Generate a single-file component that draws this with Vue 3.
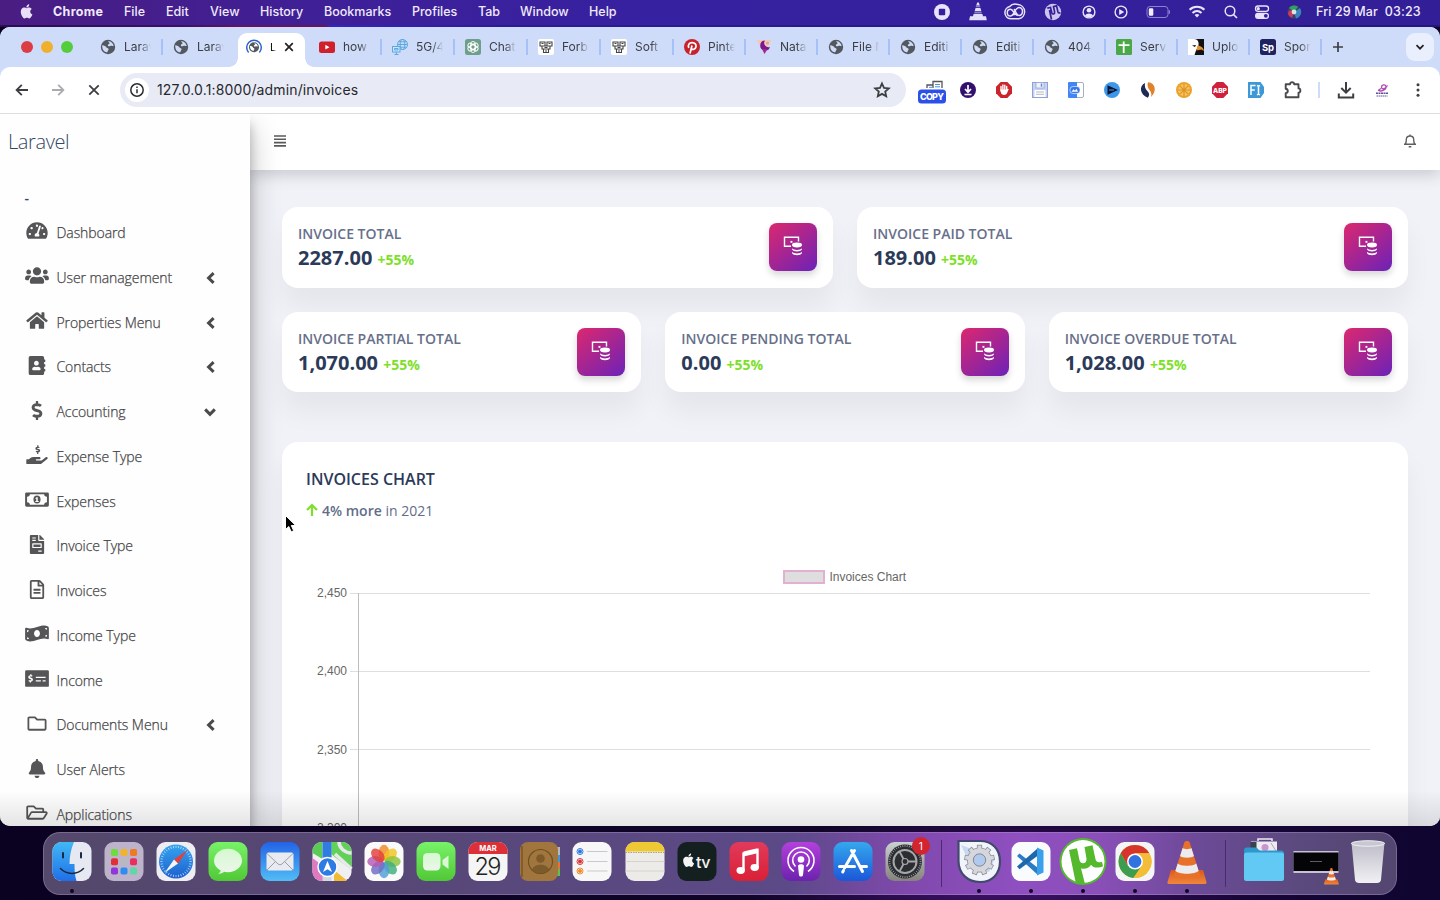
<script setup>
const menus = ['File', 'Edit', 'View', 'History', 'Bookmarks', 'Profiles', 'Tab', 'Window', 'Help']

const globe = '<circle cx="8" cy="8" r="7.2" fill="#53585f"/><path d="M2.2 6.2c2.2.2 3.5.8 4.1 2 .5 1.200 2.300.6 2.300 2 0 1.100-1.200 1.300-1.200 3.100-3 .1-5.400-2.600-5.200-7.100zM8 2.300c2.600-.3 4.900 1.600 5.700 4.400-1.300.8-2.300-.3-3.500.4-1.200.6-2.700 0-2.300-1.200.3-1 1.600-.7 1.700-1.700 0-.8-1.400-.9-1.600-1.900z" fill="#cfdcf9"/>'
const robot = '<rect width="16" height="16" rx="2" fill="#fff"/><g fill="none" stroke="#444" stroke-width="1.100"><path d="M2 3h5v4H2zM9 3h5v4H9zM4 7h8v3H4zM5.500 10h5v3.500h-5z"/></g><path d="M3.500 4.500h2M10.500 4.500h2M6.500 8.500h3M7 12h2" stroke="#444"/>'

const tabs = [
  { title: 'Larav', w: 73, icon: globe, sep: true },
  { title: 'Larav', w: 73, icon: globe },
  { title: 'L', w: 73, active: true, icon: '<path d="M2.600 13.400a7.300 7.300 0 1 1 10.800 0" fill="none" stroke="#2b62cc" stroke-width="1.500"/><circle cx="8" cy="8.300" r="5" fill="#53585f"/><path d="M4 7c1.500 0 2.500.5 3 1.400.4.8 1.500.5 1.400 1.500-.1.800-.8.900-.8 2.100C5.200 11.800 3.800 9.800 4 7zM8.200 4.300c1.800 0 3.200 1.300 3.700 3-1 .5-1.700-.2-2.500.2-.9.400-1.700-.1-1.500-.9.200-.7 1.100-.4 1.200-1.100z" fill="#fff"/>' },
  { title: 'how', w: 73, sep: true, icon: '<rect x="0" y="2.500" width="16" height="11.500" rx="2.500" fill="#cf202b"/><path d="M6.300 5.800v4.800L10.500 8.200z" fill="#fff"/>' },
  { title: '5G/4', w: 73, sep: true, icon: '<g fill="none" stroke="#5aa9e0" stroke-width="1"><circle cx="10.500" cy="5.500" r="5"/><ellipse cx="10.500" cy="5.500" rx="2.300" ry="5"/><path d="M5.500 5.500h10M6.500 2.800h8M6.500 8.200h8"/></g><g fill="#cfe4fb" stroke="#5aa9e0"><rect x=".5" y="7.500" width="7.500" height="5.500"/><path d="M2.500 15.500h4M4.300 13v2.500M2.500 9.500h3.500v1.500H2.500z"/></g>' },
  { title: 'Chat', w: 73, sep: true, icon: '<rect width="16" height="16" rx="2.500" fill="#6f9e8b"/><g fill="none" stroke="#fff" stroke-width=".9"><rect x="5.700" y="2.500" width="4.600" height="8" rx="2.300"/><rect x="5.700" y="2.500" width="4.600" height="8" rx="2.300" transform="rotate(60 8 8)"/><rect x="5.700" y="2.500" width="4.600" height="8" rx="2.300" transform="rotate(120 8 8)"/><rect x="5.700" y="2.500" width="4.600" height="8" rx="2.300" transform="rotate(180 8 8)"/><rect x="5.700" y="2.500" width="4.600" height="8" rx="2.300" transform="rotate(240 8 8)"/><rect x="5.700" y="2.500" width="4.600" height="8" rx="2.300" transform="rotate(300 8 8)"/></g>' },
  { title: 'Forb', w: 73, sep: true, icon: robot },
  { title: 'Soft', w: 73, sep: true, icon: robot },
  { title: 'Pinte', w: 72, sep: true, icon: '<circle cx="8" cy="8" r="8" fill="#c8232c"/><path d="M6 14.500 8 6.500M4.800 8.800C3.600 6.300 5 3.600 8.200 3.600c2.800 0 4.300 1.900 3.800 4.200-.6 2.600-3.600 3.500-4.700 1.700" fill="none" stroke="#fff" stroke-width="1.700"/>' },
  { title: 'Nata', w: 72, sep: true, icon: '<path d="M.5 1h15L8.500 15.500z" fill="#f0c9b8"/><path d="M9 1.500a5 5 0 1 0 5 6.500 4.300 4.300 0 0 1-5-6.500z" fill="#7a1a8e"/><path d="M6 10h5.500l-3 5z" fill="#9a2a9a"/><circle cx="11.500" cy="4" r="1.600" fill="#e9a08c"/>' },
  { title: 'File M', w: 72, sep: true, icon: globe },
  { title: 'Editi', w: 72, sep: true, icon: globe },
  { title: 'Editi', w: 72, sep: true, icon: globe },
  { title: '404', w: 72, sep: true, icon: globe },
  { title: 'Serv', w: 72, sep: true, icon: '<rect width="16" height="16" rx="1.500" fill="#4ba847"/><path d="M2.500 6.200h11M7.700 2.500v11.500" stroke="#fff" stroke-width="1.800"/>' },
  { title: 'Uplo', w: 72, sep: true, icon: '<path d="M0 0h16v16H0z" fill="#111"/><path d="M0 0h6c4 0 5 3 4.500 6.500L8 11.500 6.500 16H0z" fill="#fff"/><path d="M9.500 6.500c3 .3 6 2 6.500 5.500l-2.500-1.500-5 1z" fill="#e8912a"/><path d="M4 6.500l4-.5-1 2z" fill="#111"/>' },
  { title: 'Spor', w: 72, sep: true, icon: '<rect width="16" height="16" rx="2.500" fill="#1f2360"/><text x="8" y="11.800" text-anchor="middle" font-family="Inter, sans-serif" font-size="9.500" font-weight="700" fill="#fff">Sp</text>' },
]

const status = [
  { w: 36, icon: '<circle cx="12" cy="12" r="8" fill="#eae4fb"/><rect x="8.800" y="8.800" width="6.400" height="6.400" rx="1" fill="#34209c"/>' },
  { w: 36, icon: '<path d="M11.200 2.500h1.600l1 3h-3.600zM9.600 8h4.800l1 3.300H8.600zM7.600 14h8.800l.6 2.200H20l.8 4H3.200l.8-4h3z" fill="#e6dff8"/><path d="M9.800 6.500h4.400M8.300 12.700h7.400" stroke="#8f7fd0" stroke-width="1.500"/>' },
  { w: 38, icon: '<g fill="none" stroke="#eae4fb" stroke-width="1.500"><path d="M7.500 18.800a6.200 6.200 0 0 1-.8-12.200C9 3.800 12.500 3.600 15 4.600a7.200 7.200 0 0 1 1 14.200z"/><path d="M11.500 15.300l-1-1M14.500 15.500c-3.500 0-4-6.200-7-6.200-4.300 0-4.300 6.700 0 6.700 3.500 0 4.500-8.500 8.300-8.500 4.900 0 4.900 8 .2 8-2.500 0-3.500-4.500-5-6.500"/></g>' },
  { w: 38, icon: '<circle cx="12" cy="12" r="8.200" fill="#cfc4ee"/><path d="M6.300 8.200 9.500 7.500l1.300 5.200c.6 2 3.200 1.600 2.800-.8L12.500 6.700l3-.8 1.500 6c.3 1 1.100 1.300 2.500.8M8.500 10l2 9.500" fill="none" stroke="#35219b" stroke-width="1.700"/>' },
  { w: 33, icon: '<circle cx="12" cy="12" r="5.900" fill="none" stroke="#eae4fb" stroke-width="1.400"/><circle cx="12" cy="10.300" r="2.300" fill="#eae4fb"/><path d="M8 15.800c1.400-3.200 6.600-3.200 8 0a6 6 0 0 1-8 0z" fill="#eae4fb"/>' },
  { w: 32, icon: '<circle cx="12" cy="12" r="5.900" fill="none" stroke="#eae4fb" stroke-width="1.400"/><path d="M10.200 9v6l5-3z" fill="#eae4fb"/>' },
  { w: 41, icon: '<rect x="1" y="6.500" width="21" height="11" rx="3" fill="none" stroke="#8f80cf"/><rect x="2.800" y="8.300" width="4.500" height="7.400" rx="1.200" fill="#f2eefd"/><path d="M23.300 10.300v3.400" stroke="#8f80cf" stroke-width="1.400"/>' },
  { w: 38, icon: '<g fill="none" stroke="#eae4fb" stroke-width="2.100"><path d="M4.600 9.800c4.200-4 10.600-4 14.800 0M7.500 12.900c2.600-2.400 6.400-2.400 9 0"/></g><path d="M9.600 15c1.400-1.300 3.400-1.300 4.800 0L12 17.500z" fill="#eae4fb"/>' },
  { w: 29, icon: '<circle cx="11" cy="11" r="4.800" fill="none" stroke="#eae4fb" stroke-width="1.500"/><path d="M14.600 14.600 18 18" stroke="#eae4fb" stroke-width="1.600"/>' },
  { w: 34, icon: '<rect x="5.500" y="6" width="13" height="5.300" rx="2.600" fill="none" stroke="#eae4fb" stroke-width="1.300"/><circle cx="8.300" cy="8.700" r="1.600" fill="#eae4fb"/><rect x="5" y="12.700" width="14" height="6.200" rx="3" fill="#eae4fb"/><circle cx="15.800" cy="15.800" r="1.900" fill="#34209c"/>' },
  { w: 29, icon: '<circle cx="12" cy="12" r="6.700" fill="#3a3f66"/><path d="M7 8a6.700 6.700 0 0 1 9-1.300l-4 5.300z" fill="#2f9f6a"/><path d="M6 14c0-4 3-5 6-2l-2 6a6.700 6.700 0 0 1-4-4z" fill="#c93a5f"/><path d="M12 12l6-4a6.700 6.700 0 0 1-4 10.400z" fill="#3a86b8"/><circle cx="12" cy="12" r="2.400" fill="#fff" opacity=".8"/>' },
]

const extensions = [
  '<path d="M7 10V7h6M13 10V3.500h9V10" fill="none" stroke="#555" stroke-width="1.300"/><path d="M15 6.500h5M15 8.800h5M9 9.300h3" stroke="#4f8fe0"/><rect x="-2" y="11.500" width="28" height="14" rx="3.500" fill="#2b50e8"/><text x="12" y="22" text-anchor="middle" textLength="24" font-family="Inter, sans-serif" font-size="9" font-weight="800" fill="#fff">COPY</text>',
  '<circle cx="12" cy="12" r="8" fill="#34106e"/><path d="M12 7v7M9 11l3 3.200 3-3.200M8.500 16.500h7" fill="none" stroke="#fff" stroke-width="1.700"/>',
  '<path d="M8.700 4h6.600L20 8.700v6.600L15.300 20H8.700L4 15.300V8.700z" fill="#c9252b"/><path d="M9 13V8.500M10.900 12V7M12.800 12V7.200M14.700 13V8.500M16 11.500l-1.200 2" stroke="#fff" stroke-width="1.400" stroke-linecap="round"/><path d="M8.400 11.500h7v3c-.8 3-5 3.300-6.300.8z" fill="#fff"/>',
  '<rect x="4.500" y="4.500" width="15" height="15" fill="#c6d2f0" stroke="#8fa1d8"/><rect x="8" y="4.500" width="8" height="5.500" fill="#eef3fc" stroke="#8fa1d8" stroke-width=".7"/><path d="M13.500 5.500v3.200" stroke="#7088cc" stroke-width="1.500"/><rect x="6.500" y="12" width="11" height="7" fill="#fff"/><path d="M8 14h8M8 16.300h8" stroke="#b2b8c8"/>',
  '<rect x="9" y="4.500" width="10.500" height="15" rx="1.500" fill="#fff" stroke="#a9b0bb"/><path d="M5 4h8v16H5a1 1 0 0 1-1-1V5a1 1 0 0 1 1-1z" fill="#4285f4"/><rect x="6" y="8.500" width="10" height="7" rx="3" fill="#3a78e8" stroke="#fff" stroke-width=".6"/><path d="M7.500 13.700l2-2.500 1.500 1.500 1.500-2 1.500 3z" fill="#fff"/>',
  '<circle cx="12" cy="12" r="8" fill="#3c97ea"/><path d="M7.500 7.200 18 12 7.500 16.800z" fill="#0d1330"/><path d="M9 12h5" stroke="#3c97ea"/>',
  '<path d="M9 5c-6 2.500-5.500 11.500 2.800 14.800 2-2.800 1.700-4.800-.3-6.600-2.200-2-3.100-4.700-2.500-8.200z" fill="#1f2a55"/><path d="M12 4.300c7.800.5 9 9.500 3 14.700.9-3 .1-5-1.500-7-1.800-2.200-2.500-4.900-1.500-7.700z" fill="#e0822c"/>',
  '<circle cx="12" cy="12" r="8" fill="#e8a22e"/><circle cx="12" cy="12" r="6" fill="#f6c55a"/><path d="M12 6v12M6 12h12M7.800 7.800l8.400 8.400M16.200 7.800l-8.400 8.400" stroke="#e0922a" stroke-width="1.200"/>',
  '<path d="M8.700 4h6.600L20 8.700v6.600L15.300 20H8.700L4 15.300V8.700z" fill="#d0203c"/><text x="12" y="14.700" text-anchor="middle" font-family="Inter, sans-serif" font-size="6.700" font-weight="800" fill="#fff">ABP</text>',
  '<path d="M4 4h12.500l3.500 5v6l-3.500 5H4z" fill="#3e98d8"/><path d="M7 17V7.500h4.500M7 12h3.800M13 7.500l1.500.7 1.500-.7M14.500 8v8M13 16.700l1.500-.7 1.500.7" fill="none" stroke="#fff" stroke-width="1.500"/>',
  '<path d="M5.700 6.200H10c-.2-2.600 4.400-2.600 4.200 0h4.300v4.200c2.500 0 2.500 4.300 0 4.300v4.600H5.700v-4.200c2.800-.4 2.800-4 0-4.400z" fill="none" stroke="#484a4e" stroke-width="1.900" stroke-linejoin="round"/>',
]

const nav = [
  { label: 'Dashboard', vb: '0 0 576 512', d: 'M288 32C128.940 32 0 160.940 0 320c0 52.800 14.250 102.260 39.060 144.800 5.610 9.620 16.300 15.200 27.440 15.200h443c11.140 0 21.830-5.580 27.440-15.200C561.750 422.260 576 372.800 576 320c0-159.060-128.940-288-288-288zm0 64c14.710 0 26.580 10.130 30.320 23.650-1.110 2.260-2.640 4.230-3.450 6.670l-9.220 27.670c-5.130 3.490-10.970 6.010-17.640 6.010-17.670 0-32-14.330-32-32S270.330 96 288 96zM96 384c-17.670 0-32-14.330-32-32s14.330-32 32-32 32 14.330 32 32-14.330 32-32 32zm48-160c-17.670 0-32-14.330-32-32s14.330-32 32-32 32 14.330 32 32-14.330 32-32 32zm246.770-72.410l-61.330 184C343.130 347.330 352 364.540 352 384c0 11.720-3.380 22.550-8.880 32H232.880c-5.500-9.450-8.880-20.280-8.880-32 0-33.940 26.500-61.430 59.900-63.590l61.340-184.010c4.170-12.560 17.730-19.450 30.360-15.170 12.570 4.190 19.350 17.790 15.170 30.360zm14.660 57.200l15.520-46.550c3.470-1.290 7.130-2.230 11.050-2.230 17.670 0 32 14.330 32 32s-14.330 32-32 32c-11.380-.01-20.890-6.280-26.570-15.220zM480 384c-17.670 0-32-14.330-32-32s14.330-32 32-32 32 14.330 32 32-14.330 32-32 32z' },
  { label: 'User management', arrow: 'left', vb: '0 0 640 512', d: 'M96 224c35.300 0 64-28.700 64-64s-28.700-64-64-64-64 28.700-64 64 28.700 64 64 64zm448 0c35.300 0 64-28.700 64-64s-28.700-64-64-64-64 28.700-64 64 28.700 64 64 64zm32 32h-64c-17.600 0-33.500 7.100-45.100 18.600 40.300 22.100 68.900 62 75.100 109.400h66c17.700 0 32-14.300 32-32v-32c0-35.300-28.700-64-64-64zm-256 0c61.900 0 112-50.100 112-112S381.900 32 320 32 208 82.100 208 144s50.100 112 112 112zm76.800 32h-8.300c-20.800 10-43.900 16-68.500 16s-47.600-6-68.500-16h-8.300C179.600 288 128 339.600 128 403.200V432c0 26.500 21.500 48 48 48h288c26.500 0 48-21.500 48-48v-28.800c0-63.600-51.600-115.200-115.200-115.200zm-223.700-13.400C161.500 263.100 145.600 256 128 256H64c-35.300 0-64 28.700-64 64v32c0 17.700 14.300 32 32 32h65.900c6.300-47.400 34.900-87.300 75.200-109.400z' },
  { label: 'Properties Menu', arrow: 'left', vb: '0 0 576 512', d: 'M280.370 148.260L96 300.110V464a16 16 0 0 0 16 16l112.060-.29a16 16 0 0 0 15.920-16V368a16 16 0 0 1 16-16h64a16 16 0 0 1 16 16v95.640a16 16 0 0 0 16 16.050L464 480a16 16 0 0 0 16-16V300L295.670 148.260a12.190 12.190 0 0 0-15.300 0zM571.600 251.470L488 182.560V44.050a12 12 0 0 0-12-12h-56a12 12 0 0 0-12 12v72.610L318.470 43a48 48 0 0 0-61 0L4.340 251.470a12 12 0 0 0-1.600 16.900l25.500 31A12 12 0 0 0 45.150 301l235.220-193.740a12.190 12.190 0 0 1 15.300 0L530.900 301a12 12 0 0 0 16.900-1.600l25.500-31a12 12 0 0 0-1.700-16.930z' },
  { label: 'Contacts', arrow: 'left', vb: '0 0 448 512', d: 'M436 160c6.600 0 12-5.400 12-12v-40c0-6.600-5.400-12-12-12h-20V48c0-26.500-21.500-48-48-48H48C21.500 0 0 21.500 0 48v416c0 26.500 21.500 48 48 48h320c26.500 0 48-21.500 48-48v-48h20c6.600 0 12-5.400 12-12v-40c0-6.600-5.400-12-12-12h-20v-64h20c6.600 0 12-5.400 12-12v-40c0-6.600-5.400-12-12-12h-20v-64h20zm-228-32c35.300 0 64 28.700 64 64s-28.700 64-64 64-64-28.700-64-64 28.700-64 64-64zm112 236.800c0 10.600-10 19.200-22.400 19.200H118.400C106 384 96 375.400 96 364.800v-19.200c0-31.800 30.100-57.600 67.200-57.600h5c12.300 5.100 25.700 8 39.800 8s27.600-2.900 39.800-8h5c37.100 0 67.200 25.800 67.200 57.600v19.200z' },
  { label: 'Accounting', arrow: 'down', vb: '0 0 288 512', d: 'M209.200 233.400l-108-31.600C88.700 198.200 80 186.500 80 173.500c0-16.300 13.200-29.500 29.500-29.500h66.300c12.200 0 24.200 3.700 34.200 10.500 6.100 4.100 14.300 3.100 19.500-2l34.800-34c7.100-6.900 6.100-18.400-1.800-24.500C238 74.800 207.400 64.100 176 64V16c0-8.800-7.200-16-16-16h-32c-8.800 0-16 7.200-16 16v48h-2.500C45.800 64-5.400 118.700.5 183.600c4.200 46.100 39.400 83.600 83.800 96.600l102.500 30c12.500 3.700 21.200 15.300 21.200 28.300 0 16.300-13.200 29.500-29.500 29.500h-66.300C100 368 88 364.300 78 357.500c-6.100-4.100-14.300-3.100-19.500 2l-34.800 34c-7.100 6.900-6.100 18.400 1.800 24.500 24.500 19.200 55.100 29.900 86.500 30v48c0 8.800 7.200 16 16 16h32c8.800 0 16-7.200 16-16v-48.200c46.600-.9 90.300-28.600 105.700-72.700 21.500-61.600-14.600-124.800-72.500-141.700z' },
  { label: 'Expense Type', vb: '0 0 576 512', d: 'M565.300 328.100c-11.800-10.700-30.200-10-42.600 0L430.300 402c-11.300 9.100-25.400 14-40 14H272c-8.800 0-16-7.200-16-16s7.200-16 16-16h78.300c15.900 0 30.700-10.900 33.300-26.600 3.300-20-12.100-37.400-31.600-37.400H192c-27 0-53.100 9.300-74.100 26.300L71.400 384H16c-8.800 0-16 7.200-16 16v96c0 8.800 7.200 16 16 16h356.800c14.500 0 28.600-4.900 40-14L564 377c15.200-12.100 16.400-35.300 1.300-48.900z M335 107l-44-13c-9-3-9-15 0-15h32c6 0 11 2 16 5l25-22c-10-10-23-14-37-15V5h-34v42c-50 2-68 67-18 86l50 16c9 4 8 15-1 15h-32c-7 0-13-3-18-7l-24 24c11 9 24 14 40 15v44h34v-44c56-2 71-73 11-89z' },
  { label: 'Expenses', vb: '0 0 640 512', d: 'M40 64h560q40 0 40 40v304q0 40-40 40H40q-40 0-40-40V104q0-40 40-40zm88 48q0 64-76 70v148q76 6 76 70h384q0-64 76-70V182q-76-6-76-70zM320 148a96 108 0 1 1 0 216 96 108 0 0 1 0-216zm-10 45-32 22v22h22v58h-24v25h88v-25h-24V193z' },
  { label: 'Invoice Type', vb: '0 0 384 512', d: 'M288 256H96v64h192v-64zm89-151L279.100 7c-4.500-4.500-10.600-7-17-7H256v128h128v-6.100c0-6.300-2.500-12.400-7-16.900zm-153 31V0H24C10.700 0 0 10.700 0 24v464c0 13.300 10.700 24 24 24h336c13.300 0 24-10.700 24-24V160H248c-13.200 0-24-10.800-24-24zM64 72c0-4.420 3.580-8 8-8h80c4.420 0 8 3.580 8 8v16c0 4.420-3.580 8-8 8H72c-4.420 0-8-3.580-8-8V72zm0 64c0-4.420 3.580-8 8-8h80c4.420 0 8 3.580 8 8v16c0 4.420-3.580 8-8 8H72c-4.420 0-8-3.580-8-8v-16zm256 304c0 4.420-3.580 8-8 8h-80c-4.420 0-8-3.580-8-8v-16c0-4.420 3.580-8 8-8h80c4.420 0 8 3.580 8 8v16zm0-200v96c0 8.840-7.160 16-16 16H80c-8.840 0-16-7.160-16-16v-96c0-8.840 7.160-16 16-16h224c8.840 0 16 7.160 16 16z' },
  { label: 'Invoices', vb: '0 0 384 512', d: 'M288 248v28c0 6.600-5.400 12-12 12H108c-6.600 0-12-5.400-12-12v-28c0-6.600 5.400-12 12-12h168c6.600 0 12 5.400 12 12zm-12 72H108c-6.600 0-12 5.400-12 12v28c0 6.600 5.400 12 12 12h168c6.600 0 12-5.400 12-12v-28c0-6.600-5.400-12-12-12zm108-188.100V464c0 26.500-21.500 48-48 48H48c-26.500 0-48-21.500-48-48V48C0 21.500 21.500 0 48 0h204.100C264.800 0 277 5.100 286 14.100L369.900 98c9 8.900 14.100 21.200 14.100 33.900zm-128-80V128h76.100L256 51.900zM336 464V176H232c-13.300 0-24-10.700-24-24V48H48v416h288z' },
  { label: 'Income Type', vb: '0 0 640 512', d: 'M622 65c-100-47-201-17-302 15C226 110 132 138 38 102c-18-7-38 6-38 26v264c0 23 14 45 34 54 96 45 191 15 286-15s189-60 282-24c18 7 38-6 38-26V118c0-23-5-44-18-53zM52 165c18 3 30 5 48 6 0 28-21 50-48 50zm0 242v-52c28 0 50 21 52 50-18 4-34 5-52 2zm268-57c-44 0-80-42-80-94s36-94 80-94 80 42 80 94-36 94-80 94zm268-5c-17-4-34-6-50-6 1-28 23-48 50-48zm0-190c-27 0-49-18-51-45 17-4 34-5 51-2z' },
  { label: 'Income', vb: '0 0 640 512', d: 'M32 32h576q32 0 32 32v384q0 32-32 32H32q-32 0-32-32V64q0-32 32-32zm106 112v24c-63 5-69 75-21 96l42 17c15 7 10 23-2 23h-28c-8 0-15-3-21-8l-20 25c9 8 21 14 35 16v26h34v-26c66-5 70-76 22-97l-43-18c-14-7-10-21 2-21h26c7 0 14 3 19 7l20-24c-9-8-19-13-31-16v-24zm150 62v36h264v-36zm0 96v36h136v-36zm184 0v36h80v-36z' },
  { label: 'Documents Menu', arrow: 'left', vb: '0 0 512 512', d: 'M464 128H272l-54.630-54.630c-6-6-14.140-9.370-22.630-9.370H48C21.490 64 0 85.490 0 112v288c0 26.510 21.490 48 48 48h416c26.510 0 48-21.490 48-48V176c0-26.510-21.490-48-48-48zm0 272H48V112h140.120l54.630 54.630c6 6 14.140 9.370 22.630 9.370H464v224z' },
  { label: 'User Alerts', vb: '0 0 448 512', d: 'M224 512c35.320 0 63.970-28.650 63.970-64H160.030c0 35.350 28.650 64 63.970 64zm215.390-149.710c-19.320-20.760-55.470-51.990-55.470-154.290 0-77.700-54.480-139.900-127.940-155.160V32c0-17.670-14.320-32-31.980-32s-31.980 14.330-31.980 32v20.840C118.560 68.100 64.080 130.300 64.080 208c0 102.300-36.150 133.530-55.470 154.290-6 6.450-8.660 14.160-8.610 21.710.11 16.400 12.980 32 32.100 32h383.800c19.120 0 32-15.600 32.100-32 .05-7.550-2.610-15.270-8.610-21.710z' },
  { label: 'Applications', vb: '0 0 576 512', d: 'M527.900 224H480v-48c0-26.500-21.500-48-48-48H272l-64-64H48C21.500 64 0 85.500 0 112v288c0 26.500 21.500 48 48 48h400c16.500 0 31.900-8.500 40.700-22.600l79.900-128c20-31.900-3-73.400-40.700-73.400zM48 118c0-3.300 2.700-6 6-6h134.100l64 64H426c3.300 0 6 2.700 6 6v42H152c-16.800 0-32.400 8.800-41.100 23.200L48 351.400zm400 282H72l77.200-128H528z' },
]

const cardRows = [
  [
    { label: 'INVOICE TOTAL', value: '2287.00' },
    { label: 'INVOICE PAID TOTAL', value: '189.00' },
  ],
  [
    { label: 'INVOICE PARTIAL TOTAL', value: '1,070.00' },
    { label: 'INVOICE PENDING TOTAL', value: '0.00' },
    { label: 'INVOICE OVERDUE TOTAL', value: '1,028.00' },
  ],
]

const ticks = ['2,450', '2,400', '2,350', '2,300']

const tile = (fill) => `<rect x="6.500" y="8" width="39" height="39" rx="9" fill="${fill}"/>`
const apple = 'M12.200 8.600c0-1.700 1.400-2.500 1.500-2.600-.8-1.200-2.100-1.400-2.500-1.400-1.100-.1-2.100.6-2.600.6s-1.400-.6-2.300-.6C5.100 4.600 4 5.300 3.400 6.300c-1.300 2.200-.3 5.500.9 7.300.6.900 1.300 1.900 2.300 1.800.9 0 1.200-.6 2.300-.6 1 0 1.300.6 2.300.6s1.600-.9 2.200-1.800c.7-1 1-2 1-2-.1 0-2.200-.8-2.200-3zM10.500 3.500C11 2.900 11.300 2.100 11.200 1.200c-.7 0-1.600.5-2.100 1.100-.5.500-.8 1.300-.7 2.100.8.1 1.600-.3 2.100-.9z'
const cone = '<path d="M10 36h32l3.500 12c.3 1-.2 2-1.500 2H8c-1.300 0-1.800-1-1.500-2z" fill="url(#gOrange)"/><path d="M13 41C14 46 38 46 39 41L28.500 8c-.5-1.500-4.500-1.500-5 0z" fill="#e8712a"/><path d="m21.600 14-2.500 8c2 2.300 11.800 2.300 13.800 0l-2.500-8c-1.300 1.500-7.500 1.500-8.800 0zM16.700 29.500l-2.300 7.300c3 4 20.200 4 23.200 0l-2.300-7.300c-2.500 3-16.100 3-18.600 0z" fill="#ececf0"/>'
const petals = ['#f08a24', '#f2c522', '#8cc43c', '#3fae7c', '#4f9fd8', '#6c6cc4', '#b45ab4', '#e2403c']
const photos = petals.map((c, i) => `<ellipse cx="26" cy="18.800" rx="5.400" ry="8" fill="${c}" opacity=".82" transform="rotate(${i * 45} 26 27.500)"/>`).join('')
const padColors = ['#6ddc3c', '#f0b429', '#ee7a22', '#e02f36', '#b8b8bf', '#e82f5e', '#8f37d8', '#2f8cf0', '#5fd8a6']
const launchpad = padColors.map((c, i) => `<rect x="${13 + (i % 3) * 9.500}" y="${15 + Math.floor(i / 3) * 9.300}" width="7" height="7" rx="1.800" fill="${c}"/>`).join('')
const ring = (cx, cy, r, n, len, color, sw) => Array.from({ length: n }, (_, i) => `<path d="M${cx} ${cy - r}v${len}" stroke="${color}" stroke-width="${sw}" transform="rotate(${(i * 360) / n} ${cx} ${cy})"/>`).join('')

const dock = [
  { dot: true, icon: tile('#e6e9f2') + '<path d="M28 8c-3 7-4.500 14-4.500 22h5c0 6 .3 12 2 17H15.500a9 9 0 0 1-9-9V17a9 9 0 0 1 9-9z" fill="url(#gFinder)"/><path d="M17 19v4.500M35 19v4.500" stroke="#1c2a40" stroke-width="2" stroke-linecap="round"/><path d="M14.500 34.500c6 6.500 17 6.500 23 0" fill="none" stroke="#1c2a40" stroke-width="1.500" stroke-linecap="round"/>' },
  { icon: tile('#bdb4cc') + launchpad },
  { icon: tile('#eeeef2') + '<circle cx="26" cy="27.500" r="17" fill="url(#gSafari)"/>' + ring(26, 27.5, 15.7, 36, 2.2, '#cfe8ff', 0.7) + '<path d="M37.500 16 28 29.500l-4-4z" fill="#e63f3a"/><path d="M14.500 39 24 25.500l4 4z" fill="#f3f5f8"/>' },
  { icon: tile('url(#gGreen)') + '<ellipse cx="26" cy="26.500" rx="14" ry="11.700" fill="url(#gBubble)"/><path d="M19 35c0 2.500-1.500 4-3 4.700 3 .3 5.500-.9 7-2.700z" fill="#dff5dc"/>' },
  { icon: tile('url(#gMail)') + '<rect x="12.500" y="18.500" width="27" height="18" rx="2" fill="#e9ebf0"/><path d="M13 19.500 24 30c1.200 1 2.800 1 4 0l11-10.500M13 36l8.500-8.500M39 36l-8.500-8.500" fill="none" stroke="#9aa0aa" stroke-width="1"/>' },
  { icon: tile('#f0f0f2') + '<path d="M6.500 17a9 9 0 0 1 9-9h1v17l-10-6z" fill="#5ccb55"/><path d="M25 8h11.500a9 9 0 0 1 9 9v19L25 20z" fill="#62d15a"/><path d="M6.500 24 17 32v15h-1.500a9 9 0 0 1-9-9z" fill="#e07ac0"/><path d="M28 36l13 10.500a9 9 0 0 1-4.500.5H28z" fill="#f3bb33"/><path d="M16.500 8h9v39h-9z" fill="#d5d7de"/><path d="M16.500 8h9v16h-9z" fill="#2f7de0"/><path d="M33 8c0 6 6 11 12.500 11M29 20l16.500 15" fill="none" stroke="#e8e8ea" stroke-width="3.500"/><circle cx="21.500" cy="33" r="9.500" fill="#2f7be6" stroke="#fff" stroke-width="1.500"/><path d="M21.500 27l4.500 11-4.500-2.700L17 38z" fill="#fff"/>' },
  { icon: tile('#fafafa') + photos },
  { icon: tile('url(#gGreen)') + '<rect x="13" y="19" width="17.500" height="17.500" rx="4.500" fill="url(#gBubble)"/><path d="M32.500 26l6-4.500v13.500l-6-4.500z" fill="#d9f7d4"/>' },
  { icon: tile('#f6f5f5') + '<path d="M6.500 20v-3a9 9 0 0 1 9-9h21a9 9 0 0 1 9 9v3z" fill="#dc2f38"/><text x="26" y="17" text-anchor="middle" font-family="Inter, sans-serif" font-size="7.500" font-weight="700" fill="#fff">MAR</text><text x="26" y="41" text-anchor="middle" font-family="Inter, sans-serif" font-size="23.500" font-weight="300" textLength="27" fill="#222">29</text>' },
  { icon: '<path d="M42 13h4v8h-4z" fill="#b8b8b8"/><path d="M42 21h4v7h-4z" fill="#3d9ad8"/><path d="M42 28h4v7h-4z" fill="#e8722e"/><path d="M42 35h4v7h-4z" fill="#5fc04c"/><rect x="6" y="8" width="38" height="39" rx="8" fill="#a0763e"/><path d="M8 12v31" stroke="#7c5626" stroke-width="1.500"/><g fill="none" stroke="#70501f" stroke-width="1.200"><circle cx="26.500" cy="27.500" r="12"/></g><circle cx="26.500" cy="24.500" r="4.300" fill="#7c5a2a"/><path d="M18 35.500c2-6.500 15-6.500 17 0-4 5-13 5-17 0z" fill="#7c5a2a"/>' },
  { icon: tile('#f7f7f8') + '<g fill="#fff" stroke-width="1"><circle cx="14" cy="17.500" r="3" stroke="#2d76e0"/><circle cx="14" cy="27.500" r="3" stroke="#d8323c"/><circle cx="14" cy="37" r="3" stroke="#ee8b2c"/></g><circle cx="14" cy="17.500" r="2" fill="#2d76e0"/><circle cx="14" cy="27.500" r="2" fill="#d8323c"/><circle cx="14" cy="37" r="2" fill="#ee8b2c"/><path d="M21 17.500h20.500M21 27.500h20.500M21 37h20.500" stroke="#c9c9cd" stroke-width="1.200"/>' },
  { icon: tile('#edebe8') + '<path d="M6.500 17.500V17a9 9 0 0 1 9-9h21a9 9 0 0 1 9 9v.5z" fill="#efc934"/><path d="M6.500 18.500h39" stroke="#9f8f5a" stroke-width=".8" stroke-dasharray="1.500 1"/><path d="M6.500 27.500h39M6.500 37h39" stroke="#d3d0cc" stroke-width=".9"/>' },
  { icon: tile('#14201f') + `<path d="${apple}" transform="translate(9.500 18.300) scale(.95)" fill="#f4f4f4"/><text x="25" y="33.500" font-family="Inter, sans-serif" font-size="16" font-weight="500" textLength="14.500" fill="#f4f4f4">tv</text>` },
  { icon: tile('url(#gMusic)') + '<path d="M20.500 36V19.500l14-3.500v17" fill="none" stroke="#fff" stroke-width="2.400"/><path d="M20.500 17.500l14-3.300v5l-14 3.300z" fill="#fff"/><ellipse cx="17.700" cy="36.500" rx="4.200" ry="3.400" fill="#fff"/><ellipse cx="31.700" cy="33.500" rx="4.200" ry="3.400" fill="#fff"/>' },
  { icon: tile('url(#gPod)') + '<g fill="none" stroke="#fff" stroke-width="1.600"><path d="M19 37.500a13 13 0 1 1 14 0"/><path d="M20.500 32.500a8.300 8.300 0 1 1 11 0"/></g><circle cx="26" cy="25.500" r="3.300" fill="#fff"/><path d="M23 32c0-2.200 6-2.200 6 0l-1 9c-.3 2-3.700 2-4 0z" fill="#fff"/>' },
  { icon: tile('url(#gStore)') + '<g stroke="#fff" stroke-width="3" stroke-linecap="round"><path d="M27.500 16.500 17.500 34M24.500 16.500 35.500 37.500M12.500 32.500h15M33.500 32.500h6M16.500 36.500l-.8 1.500"/></g>' },
  { badge: '1', icon: tile('url(#gGrey)') + '<circle cx="26" cy="27.500" r="17" fill="#2b2d30"/>' + ring(26, 27.5, 16.5, 44, 1.8, '#a3a6a8', 0.8) + '<g fill="none" stroke="#a5a8aa"><circle cx="26" cy="27.500" r="11.500" stroke-width="2"/><circle cx="26" cy="27.500" r="3" stroke-width="1.200"/><path d="M29 27.500h8.500M24.500 25l-4-7.500M24.500 30l-4 7.500" stroke-width="1.800"/></g>' },
  { sep: true, w: 22 },
  { dot: true, icon: '<path d="M5.500 7H27c12 0 20 8 20 20.500S39 48 27 48s-21.500-8-21.500-21z" fill="#f1f4fa" stroke="#414a6c" stroke-width="2.200"/><path d="M8 11l34 13-6 14-16-2z" fill="#c6d8f2"/>' + ring(26.5, 26, 15.2, 9, 5, '#85888f', 5.2) + '<circle cx="26.500" cy="26" r="9" fill="none" stroke="#85888f" stroke-width="7"/>' + ring(26.5, 26, 14.5, 9, 5, '#d5d7dc', 3.8) + '<circle cx="26.500" cy="26" r="9" fill="#b0c9ee" stroke="#d5d7dc" stroke-width="5.600"/><circle cx="26.500" cy="26" r="6.200" fill="none" stroke="#85888f" stroke-width="1"/>' },
  { dot: true, icon: tile('#fafbfd') + '<path d="M33 14v27L12 22l2.500-2.500L33 34z" fill="#2b7cc4"/><path d="M33 14 12 32.500l2.500 2.700L33 21.500z" fill="#1f67ac"/><path d="M32 13.500l6.500 3v22l-6.500 3z" fill="#3ba0ea"/>' },
  { dot: true, icon: '<circle cx="26" cy="27.500" r="23.500" fill="#55b92e"/><circle cx="26" cy="27.500" r="21.500" fill="#fff"/><path d="m12 16 8-1.800 2.500 12c1 4.500 7.500 4 7-1.500L27.500 13l8-1.800 3 14c.6 3 3 3.700 6.500 2.500l1 4.500c-5 2.500-10 1.500-12-1.500-2 3.500-6.500 5-10 3.500L28 50h-9z" fill="#55b92e"/>' },
  { dot: true, icon: tile('#f4f5f7') + '<circle cx="26" cy="27.500" r="16.500" fill="#f4bd37"/><path d="M11.700 19.300A16.500 16.500 0 0 1 40.300 19.300H26l-7.200 12.400z" fill="#d6352c"/><path d="M11.700 19.300a16.500 16.500 0 0 0 12.500 24.600l8.500-12.200H18.800z" fill="#3a9d4f"/><path d="M40.300 19.300H26l7 12.500-8 12.200a16.500 16.500 0 0 0 15.300-24.700z" fill="#f4bd37"/><circle cx="26" cy="27.500" r="8" fill="#fff"/><circle cx="26" cy="27.500" r="6.400" fill="#2f72e0"/>' },
  { dot: true, icon: cone },
  { sep: true, w: 25 },
  { icon: '<path d="M13 7.500h26v14H13z" fill="#eeeaf4"/><path d="M12.500 8h6v12h-6z" fill="#39424c"/><path d="M20 7V5h14v2" fill="none" stroke="#efeaf6" stroke-width="1.500"/><circle cx="27" cy="13.500" r="3.500" fill="#c896c8"/><path d="M33 9l5 8" stroke="#aaa"/><path d="M6 17c0-3 1-3.500 3-3.500h8.500c2.500 0 2.500 3 5 3H43c2 0 3 1 3 3V44c0 2-1 3-3 3H9c-2 0-3-1-3-3z" fill="#2f97cc"/><rect x="6" y="18.500" width="40" height="28.500" rx="2.500" fill="#62c9f4"/>' },
  { icon: '<rect x="3.500" y="17" width="45" height="22" fill="#c9c2d6"/><rect x="3.500" y="18.500" width="45" height="18.500" fill="#050507"/><path d="M20 27.500h12" stroke="#666" stroke-width=".9"/><g transform="translate(31.500 31.500) scale(.38)">' + cone + '</g>' },
  { icon: '<path d="M9.500 8.500h33L39 46c-.3 2-2 3-4 3H17c-2 0-3.700-1-4-3z" fill="url(#gTrash)"/><ellipse cx="26" cy="9.500" rx="16.700" ry="2.800" fill="#c9c8d2" stroke="#f0f0f4"/>' },
]
</script>

<template>
  <div class="desktop">
    <svg class="defs" width="0" height="0">
      <defs>
        <linearGradient id="gFinder" x2="0" y2="1"><stop stop-color="#41b8f5" /><stop offset="1" stop-color="#1f6fe8" /></linearGradient>
        <linearGradient id="gSafari" x2="0" y2="1"><stop stop-color="#35a4ee" /><stop offset="1" stop-color="#1d5fcf" /></linearGradient>
        <linearGradient id="gGreen" x2="0" y2="1"><stop stop-color="#78f268" /><stop offset="1" stop-color="#50c836" /></linearGradient>
        <linearGradient id="gBubble" x2="0" y2="1"><stop stop-color="#d5f9cf" /><stop offset="1" stop-color="#ecf6ea" /></linearGradient>
        <linearGradient id="gMail" x2="0" y2="1"><stop stop-color="#2363e6" /><stop offset="1" stop-color="#52bdf5" /></linearGradient>
        <linearGradient id="gMusic" x2="0" y2="1"><stop stop-color="#e23a5c" /><stop offset="1" stop-color="#d92036" /></linearGradient>
        <linearGradient id="gPod" x2="0" y2="1"><stop stop-color="#b440dd" /><stop offset="1" stop-color="#6c22ad" /></linearGradient>
        <linearGradient id="gStore" x2="0" y2="1"><stop stop-color="#35a8ee" /><stop offset="1" stop-color="#1b57d8" /></linearGradient>
        <linearGradient id="gGrey" x2="0" y2="1"><stop stop-color="#c9d2d2" /><stop offset="1" stop-color="#84827d" /></linearGradient>
        <linearGradient id="gOrange" x2="0" y2="1"><stop stop-color="#d85a20" /><stop offset="1" stop-color="#f0873a" /></linearGradient>
        <linearGradient id="gTrash" x2="0" y2="1"><stop stop-color="#bdbcc8" /><stop offset="1" stop-color="#f1f1f4" /></linearGradient>
      </defs>
    </svg>

    <header class="menubar">
      <svg class="apple" viewBox="0 0 17 17"><path :d="apple" /></svg>
      <nav class="menus">
        <b>Chrome</b>
        <span v-for="m in menus" :key="m">{{ m }}</span>
      </nav>
      <div class="status">
        <span v-for="(s, i) in status" :key="i" class="status-cell" :style="{ width: s.w + 'px' }">
          <svg viewBox="0 0 24 24" v-html="s.icon"></svg>
        </span>
      </div>
      <span class="clock">Fri 29 Mar&nbsp; 03:23</span>
    </header>

    <section class="window">
      <div class="tabstrip">
        <div class="lights"><i class="red"></i><i class="amber"></i><i class="green"></i></div>
        <div v-for="(t, i) in tabs" :key="i" class="tab" :class="{ active: t.active, sep: t.sep }" :style="{ width: t.w + 'px' }">
          <svg class="favicon" viewBox="0 0 16 16" v-html="t.icon"></svg>
          <span class="tab-title">{{ t.title }}</span>
          <svg v-if="t.active" class="tab-close" viewBox="0 0 10 10"><path d="M1.200 1.200l7.600 7.600M8.800 1.200l-7.600 7.600" /></svg>
        </div>
        <svg class="newtab" viewBox="0 0 12 12"><path d="M6 1v10M1 6h10" /></svg>
        <span class="tabsearch"><svg viewBox="0 0 10 10"><path d="M1.500 3.200 5 6.700l3.500-3.500" /></svg></span>
      </div>

      <div class="toolbar">
        <div class="nav-buttons">
          <svg viewBox="0 0 16 16"><path d="M14 8H3M7.800 2.800 2.600 8l5.200 5.200" /></svg>
          <svg class="dim" viewBox="0 0 16 16"><path d="M2 8h11M8.200 2.800 13.400 8l-5.200 5.200" /></svg>
          <svg viewBox="0 0 16 16"><path d="M3.300 3.300l9.400 9.400M12.700 3.300l-9.400 9.400" /></svg>
        </div>
        <div class="address">
          <span class="info"><svg viewBox="0 0 16 16"><circle cx="8" cy="8" r="6.200" /><path d="M8 7.300v4M8 4.500v1.500" /></svg></span>
          <span class="url">127.0.0.1:8000/admin/invoices</span>
          <svg class="star" viewBox="0 0 24 24"><path d="M12 5.500l2 4.400 4.800.5-3.600 3.200 1 4.700-4.200-2.400-4.200 2.400 1-4.700-3.600-3.200 4.800-.5z" /></svg>
        </div>
        <div class="exts">
          <span v-for="(e, i) in extensions" :key="i" class="ext"><svg viewBox="0 0 24 24" v-html="e"></svg></span>
          <i class="bar"></i>
          <span class="ext"><svg viewBox="0 0 24 24"><path d="M12 4v10M7.300 10l4.700 4.700L16.700 10M4.800 15.500v4h14.400v-4" fill="none" stroke="#3c3e42" stroke-width="2" /></svg></span>
          <span class="ext"><svg viewBox="0 0 24 24"><path d="M8.500 12.500c3 1.500 8-1 7.500-4-.5-2.500-4.500-2-4.500.5 0 3 4 2 6-1.500M8 12.500l3-2" fill="none" stroke="#b04bb0" stroke-width="1.300" /><path d="M6 15.300h12" stroke="#5d4f9a" stroke-width="1.600" stroke-dasharray="2 .5" /><path d="M6.500 18h11" stroke="#9a8cc4" stroke-width="1.300" stroke-dasharray="1.500 .5" /></svg></span>
          <span class="ext"><svg viewBox="0 0 24 24" fill="#3c3e42"><circle cx="12" cy="6.700" r="1.500" /><circle cx="12" cy="12" r="1.500" /><circle cx="12" cy="17.300" r="1.500" /></svg></span>
        </div>
      </div>

      <div class="page">
        <aside class="sidebar">
          <div class="brand">Laravel</div>
          <div class="user">-</div>
          <ul>
            <li v-for="n in nav" :key="n.label">
              <svg class="nav-icon" :viewBox="n.vb"><path :d="n.d" fill-rule="evenodd" /></svg>
              <span>{{ n.label }}</span>
              <svg v-if="n.arrow" class="arrow" :class="n.arrow" viewBox="0 0 14 14"><path d="M9.600 2.200 4.600 7l5 4.800" /></svg>
            </li>
          </ul>
        </aside>

        <main>
          <div class="topbar">
            <svg class="burger" viewBox="0 0 12 12"><path d="M0 1h12M0 4.300h12M0 7.600h12M0 10.900h12" /></svg>
            <svg class="bell" viewBox="0 0 14 16"><path d="M2.300 11.300C3.300 10 3.200 8.500 3.300 6.500 3.400 4.200 5 3 7 3s3.600 1.200 3.700 3.500c.1 2 0 3.500 1 4.800zM1 11.300h12M7 3V1.400M5.700 13.700h2.600" /></svg>
          </div>

          <div class="content">
            <div v-for="(row, r) in cardRows" :key="r" class="row">
              <div v-for="c in row" :key="c.label" class="card stat">
                <div>
                  <p class="stat-label">{{ c.label }}</p>
                  <p class="stat-value">{{ c.value }} <span>+55%</span></p>
                </div>
                <div class="stat-icon">
                  <svg viewBox="0 0 20 20">
                    <path d="M8 10.300H1.500V1.200h14v4.300" fill="none" stroke="#fff" stroke-width="1.400" />
                    <rect x="7.500" y="4.900" width="1.900" height="1.900" fill="#fff" />
                    <ellipse cx="14" cy="9" rx="5" ry="2.400" fill="#fff" />
                    <path d="M9.100 12.300c1.600 2.300 8.200 2.300 9.800 0v1.300c-1 2.600-8.800 2.600-9.800 0zM9.100 15.800c1.600 2.300 8.200 2.300 9.800 0v1.400c-1 2.600-8.800 2.600-9.800 0z" fill="#fff" />
                  </svg>
                </div>
              </div>
            </div>

            <div class="card chart">
              <h6>INVOICES CHART</h6>
              <p class="trend">
                <svg viewBox="0 0 12 14"><path d="M6 13V2M1 7l5-5 5 5" /></svg>
                <b>4% more</b>&nbsp;in 2021
              </p>
              <div class="legend"><i></i><span>Invoices Chart</span></div>
              <div class="plot">
                <div v-for="t in ticks" :key="t" class="tick"><span>{{ t }}</span><i></i></div>
                <div class="axis"></div>
              </div>
            </div>
          </div>
        </main>
        <div class="fade"></div>
        <svg class="cursor" viewBox="0 0 14 20"><path d="M1.500 1.500v14l3.300-3 2.400 5.300 2.500-1.100-2.400-5.200h4.400z" /></svg>
      </div>
    </section>

    <footer class="dock">
      <template v-for="(d, i) in dock" :key="i">
        <div v-if="d.sep" class="dock-sep" :style="{ width: d.w + 'px' }"></div>
        <div v-else class="app">
          <svg viewBox="0 0 52 62" v-html="d.icon"></svg>
          <i v-if="d.dot" class="dot"></i>
          <span v-if="d.badge" class="badge">{{ d.badge }}</span>
        </div>
      </template>
    </footer>
  </div>
</template>

<style>
body {
  margin: 0;
  overflow: hidden;
}
</style>

<style scoped>
* {
  box-sizing: border-box;
}
p, h6, ul {
  margin: 0;
  padding: 0;
  list-style: none;
}
svg {
  display: block;
  overflow: visible;
  flex: none;
}
.desktop {
  position: relative;
  width: 1440px;
  height: 900px;
  overflow: hidden;
  font-family: Inter, "Liberation Sans", sans-serif;
  background:
    radial-gradient(ellipse 260px 70px at 1000px 880px, #43136e, transparent),
    linear-gradient(90deg, #0a0220, #100528 60%, #1a0638 80%, #0f0530);
}
.defs {
  position: absolute;
}
.menubar {
  display: flex;
  align-items: center;
  height: 27px;
  padding: 0 19px 4px 18px;
  color: #f0eafc;
  font-size: 12.500px;
  font-weight: 500;
  background:
    linear-gradient(90deg, #2c0d50 0, #3a1068 180px, #66145c 240px, #66145c 325px, #3524c0 330px, #2c1c90 500px, #26167a) 0 25px / 100% 2px no-repeat,
    linear-gradient(90deg, #4a1d82, #3d2099 25%, #3621a0 45%, #321f97);
}
.apple {
  width: 17px;
  height: 17px;
  margin-right: 18px;
  fill: #e9e0f8;
}
.menus {
  display: grid;
  grid-template-columns: 71px 42px 44px 50px 64px 88px 66px 42px 69px 60px;
  white-space: nowrap;
}
.menus b {
  font-weight: 700;
  letter-spacing: 0.300px;
}
.status {
  display: flex;
  margin-left: auto;
}
.status-cell {
  display: flex;
  justify-content: center;
}
.status-cell svg {
  width: 24px;
  height: 24px;
}
.clock {
  width: 105px;
  margin-left: 8px;
  white-space: nowrap;
  letter-spacing: 0.120px;
}
.window {
  height: 799px;
  border-radius: 10px;
  overflow: hidden;
  background: #fff;
}
.tabstrip {
  display: flex;
  align-items: center;
  height: 50px;
  padding: 0 6px 10px 21px;
  background: #cfdcf9;
}
.lights {
  display: flex;
  gap: 8px;
  width: 70px;
  margin-right: 1px;
}
.lights i {
  width: 12px;
  height: 12px;
  border-radius: 50%;
}
.red { background: #dc3d45; }
.amber { background: #efb02e; }
.green { background: #54cd3c; }
.tab {
  position: relative;
  display: flex;
  align-items: center;
  height: 34px;
  padding-left: 8px;
  color: #3a3d42;
  font-size: 12px;
}
.tab.sep::after {
  content: "";
  position: absolute;
  right: 2px;
  top: 9px;
  width: 2px;
  height: 16px;
  background: #a5c1f7;
}
.favicon {
  width: 16px;
  height: 16px;
  margin-right: 8px;
}
.tab-title {
  width: 27px;
  white-space: nowrap;
  line-height: 18px;
  -webkit-mask-image: linear-gradient(90deg, #000 60%, transparent);
  mask-image: linear-gradient(90deg, #000 60%, transparent);
}
.tab.active {
  z-index: 1;
}
/* Rounded body of the selected tab */
.tab.active::before {
  content: "";
  position: absolute;
  left: 0;
  top: 3px;
  width: 67px;
  height: 34px;
  border-radius: 9px 9px 0 0;
  background: #fff;
  z-index: -1;
}
/* Flared feet joining the selected tab to the toolbar */
.tab.active::after {
  content: "";
  position: absolute;
  left: -9px;
  top: 28px;
  width: 85px;
  height: 9px;
  z-index: -2;
  background:
    radial-gradient(circle at 0 0, transparent 8.500px, #fff 9px) 0 0 / 9px 9px no-repeat,
    radial-gradient(circle at 100% 0, transparent 8.500px, #fff 9px) 100% 0 / 9px 9px no-repeat;
}
.tab.active .tab-title {
  width: 7px;
  color: #111;
  font-size: 11px;
  -webkit-mask-image: linear-gradient(90deg, #000 30%, transparent);
  mask-image: linear-gradient(90deg, #000 30%, transparent);
}
.tab-close {
  width: 10px;
  height: 10px;
  margin-left: 7px;
  fill: none;
  stroke: #222;
  stroke-width: 1.700;
}
.newtab {
  width: 12px;
  height: 12px;
  margin-left: 8px;
  stroke: #3c3f44;
  stroke-width: 1.700;
}
.tabsearch {
  display: flex;
  align-items: center;
  justify-content: center;
  width: 28px;
  height: 28px;
  margin-left: auto;
  border-radius: 9px;
  background: #e9effc;
}
.tabsearch svg {
  width: 10px;
  height: 10px;
  fill: none;
  stroke: #222;
  stroke-width: 1.700;
}
.toolbar {
  position: relative;
  display: flex;
  align-items: center;
  height: 47px;
  margin-top: -10px;
  border-radius: 10px 10px 0 0;
  border-bottom: 1px solid #dcdde0;
  background: #fff;
}
.nav-buttons {
  display: flex;
  gap: 20px;
  width: 120px;
  padding-left: 14px;
}
.nav-buttons svg {
  width: 16px;
  height: 16px;
  fill: none;
  stroke: #3c3e42;
  stroke-width: 1.800;
}
.nav-buttons .dim {
  stroke: #a9abaf;
}
.address {
  display: flex;
  align-items: center;
  width: 786px;
  height: 34px;
  padding: 0 12px 0 5px;
  border-radius: 17px;
  background: #e8eaf6;
}
.info {
  display: flex;
  align-items: center;
  justify-content: center;
  width: 24px;
  height: 24px;
  border-radius: 50%;
  background: #fff;
}
.info svg {
  width: 16px;
  height: 16px;
  fill: none;
  stroke: #2a2c30;
  stroke-width: 1.500;
}
.url {
  margin-left: 8px;
  padding-bottom: 1px;
  color: #26282c;
  font-size: 14px;
  letter-spacing: 0.140px;
}
.star {
  width: 24px;
  height: 24px;
  margin-left: auto;
  fill: none;
  stroke: #3c3e42;
  stroke-width: 1.800;
}
.exts {
  display: flex;
  align-items: center;
  margin-left: 8px;
}
.ext {
  display: flex;
  justify-content: center;
  width: 36px;
}
.ext svg {
  width: 24px;
  height: 24px;
}
.bar {
  width: 2px;
  height: 16px;
  margin: 0 8px;
  background: #cfdcf9;
}
.page {
  position: relative;
  display: flex;
  height: 712px;
  overflow: hidden;
  font-family: "Open Sans", sans-serif;
}
.sidebar {
  position: relative;
  z-index: 2;
  width: 250px;
  height: 100%;
  background: #fefefe;
  box-shadow: 0 14px 28px rgba(0, 0, 0, 0.250), 0 10px 10px rgba(0, 0, 0, 0.220);
}
.brand {
  height: 57px;
  padding-left: 8px;
  color: #344767;
  font-size: 20px;
  font-weight: 300;
  line-height: 56px;
  letter-spacing: -0.400px;
}
.user {
  height: 39.600px;
  padding: 16px 0 0 24.500px;
  color: #344767;
  font-size: 14px;
  font-weight: 600;
  line-height: 22px;
}
.sidebar li {
  display: flex;
  align-items: center;
  height: 44.770px;
  padding: 0 33px 0 25px;
  color: #454547;
  font-size: 14px;
  font-weight: 300;
  line-height: 20px;
  letter-spacing: -0.080px;
  -webkit-text-stroke: 0.250px #454547;
}
.nav-icon {
  width: 24px;
  height: 19px;
  margin: -4px 7.500px 0 0;
  fill: #555557;
}
.arrow {
  width: 14px;
  height: 14px;
  margin-left: auto;
  fill: none;
  stroke: #4a4a4c;
  stroke-width: 3;
}
.arrow.left {
  margin-right: -0.500px;
}
.arrow.down {
  transform: rotate(-90deg);
}
main {
  flex: 1;
  background: #f1f2f7;
}
.topbar {
  position: relative;
  z-index: 1;
  display: flex;
  align-items: center;
  justify-content: space-between;
  height: 56px;
  padding: 0 23px 2px 24px;
  background: #fff;
  box-shadow: 0 5px 14px rgba(40, 44, 60, 0.200);
}
.burger {
  width: 12px;
  height: 12px;
  stroke: #5a5a5c;
  stroke-width: 1.600;
}
.bell {
  width: 14px;
  height: 16px;
  margin-bottom: 1px;
  fill: none;
  stroke: #5f5f61;
  stroke-width: 1.400;
}
.content {
  padding: 37px 32px 0;
}
.row {
  display: flex;
  gap: 24px;
  margin-bottom: 24px;
}
.card {
  border-radius: 16px;
  background: #fff;
  box-shadow: 0 20px 27px rgba(0, 0, 0, 0.050);
}
.stat {
  display: flex;
  flex: 1;
  justify-content: space-between;
  height: 80.500px;
  padding: 16px;
}
.stat-label {
  color: #67708a;
  font-size: 14px;
  font-weight: 600;
  line-height: 22px;
  white-space: nowrap;
}
.stat-value {
  color: #2c3a5a;
  font-size: 20px;
  font-weight: 700;
  line-height: 26px;
}
.stat-value span {
  color: #7ee02a;
  font-size: 14px;
}
.stat-icon {
  width: 48px;
  height: 48px;
  padding: 13px 14px;
  border-radius: 8px;
  background: linear-gradient(140deg, #dc286e, #6c22b8);
  box-shadow: 0 4px 7px rgba(0, 0, 0, 0.160);
}
.stat-icon svg {
  width: 20px;
  height: 20px;
}
.chart {
  height: 500px;
  margin-top: 50px;
  padding: 24px;
}
.chart h6 {
  color: #2c3a5a;
  font-size: 16px;
  font-weight: 600;
  line-height: 26px;
}
.trend {
  display: flex;
  align-items: center;
  height: 24px;
  margin-top: 6px;
  color: #636d8a;
  font-size: 14px;
}
.trend b {
  font-weight: 600;
}
.trend svg {
  width: 12px;
  height: 14px;
  margin-right: 4px;
  fill: none;
  stroke: #7ee02a;
  stroke-width: 2.200;
}
.legend {
  display: flex;
  align-items: center;
  gap: 4.400px;
  height: 16px;
  margin: 47px 0 0 477px;
  color: #666;
  font: 12px "Liberation Sans", sans-serif;
}
.legend i {
  width: 42px;
  height: 14px;
  border: 2px solid #e3b0d2;
  background: #dedede;
}
.plot {
  position: relative;
  margin: 0 14px 0 0;
}
.tick {
  display: flex;
  align-items: center;
  height: 16px;
  margin-bottom: 62.300px;
  color: #666;
  font: 12px "Liberation Sans", sans-serif;
}
.tick span {
  width: 41px;
  text-align: right;
}
.tick i {
  flex: 1;
  height: 1px;
  margin-left: 3px;
  background: #dedede;
}
.axis {
  position: absolute;
  left: 52px;
  top: 8px;
  bottom: 0;
  width: 1px;
  background: #bdbdbd;
}
.fade {
  position: absolute;
  z-index: 3;
  left: 0;
  right: 0;
  bottom: 0;
  height: 36px;
  background: linear-gradient(transparent, rgba(0, 0, 0, 0.100));
}
.cursor {
  position: absolute;
  z-index: 4;
  left: 284px;
  top: 400px;
  width: 14px;
  height: 20px;
  fill: #000;
  stroke: #fff;
  stroke-width: 1;
}
.dock {
  display: flex;
  width: 1354px;
  height: 63px;
  margin: 6px 0 0 43px;
  padding-left: 2px;
  border: 1px solid rgba(190, 170, 220, 0.350);
  border-radius: 17px;
  background: linear-gradient(90deg, #54486b, #574776 25%, #5c4a88 55%, #8049ad 64%, #8f4fc0 72%, #8a4fb8 78%, #6d4a98 85%, #5c4a80 92%, #53466f);
}
.app {
  position: relative;
  width: 52.050px;
  height: 61px;
}
.app > svg {
  width: 52px;
  height: 62px;
  margin-top: 0.500px;
}
.dot {
  position: absolute;
  left: 24px;
  top: 56px;
  width: 4px;
  height: 4px;
  border-radius: 50%;
  background: #0d0620;
}
.badge {
  position: absolute;
  left: 33px;
  top: 4px;
  width: 18px;
  height: 18px;
  border-radius: 50%;
  color: #fff;
  background: #d3252f;
  font-size: 10px;
  line-height: 18px;
  text-align: center;
}
.dock-sep {
  height: 47px;
  margin-top: 7px;
  background: linear-gradient(#4a2a70, #4a2a70) center / 1px 100% no-repeat;
}
</style>
